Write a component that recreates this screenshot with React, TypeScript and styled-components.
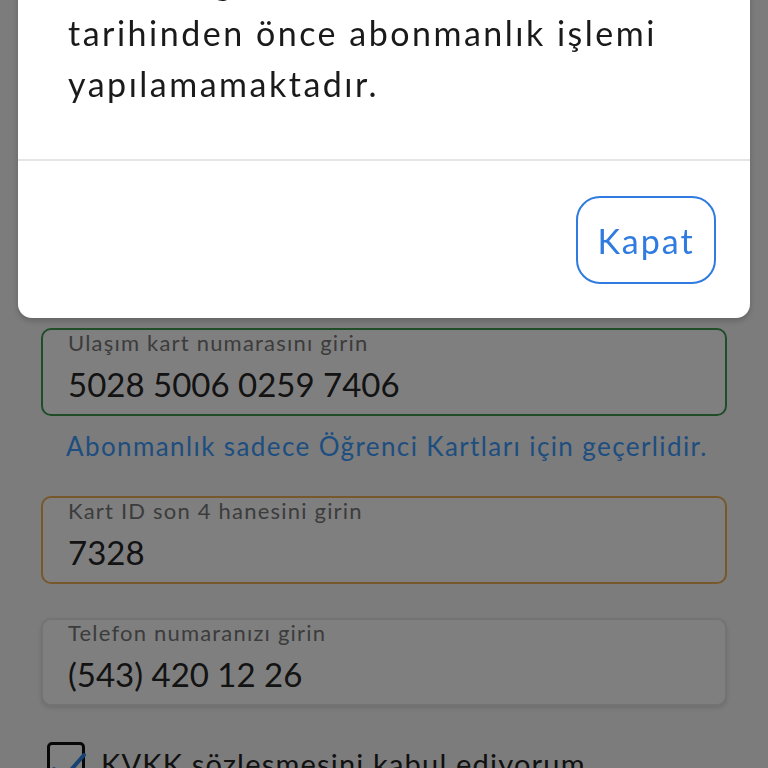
import styled, { createGlobalStyle } from 'styled-components';

const GlobalStyle = createGlobalStyle`
  html, body {
    margin: 0;
    padding: 0;
    height: 100%;
    overflow: hidden;
  }
  body {
    font-family: Lato, "Noto Sans", sans-serif;
    background: #f8f8f8;
  }
`;

type Tone = 'success' | 'warning' | 'idle';

const borderColors: Record<Tone, string> = {
  success: '#3c9a4e',
  warning: '#eeb055',
  idle: '#e6e6e6',
};

export default function App() {
  return (
    <>
      <GlobalStyle />
      <StyledPage>
        <StyledField tone="success">
          <span className="label">Ulaşım kart numarasını girin</span>
          <span className="value">5028 5006 0259 7406</span>
        </StyledField>
        <StyledHint>Abonmanlık sadece Öğrenci Kartları için geçerlidir.</StyledHint>
        <StyledField tone="warning">
          <span className="label">Kart ID son 4 hanesini girin</span>
          <span className="value">7328</span>
        </StyledField>
        <StyledField tone="idle" raised>
          <span className="label">Telefon numaranızı girin</span>
          <span className="value">(543) 420 12 26</span>
        </StyledField>
        <StyledCheckRow>
          <span className="box">
            <svg viewBox="0 0 40 40" width="40" height="40">
              <path
                d="M6 22 L15 32 L36 8"
                fill="none"
                stroke="#2f86e6"
                strokeWidth="4"
                strokeLinecap="round"
                strokeLinejoin="round"
              />
            </svg>
          </span>
          <span>KVKK sözleşmesini kabul ediyorum</span>
        </StyledCheckRow>
      </StyledPage>

      <StyledBackdrop>
        <StyledDialog>
          <StyledDialogBody>
            Kartınız güncel halde, vize
            <br />
            tarihinden önce abonmanlık işlemi
            <br />
            yapılamamaktadır.
          </StyledDialogBody>
          <StyledDialogFooter>
            <StyledCloseButton>Kapat</StyledCloseButton>
          </StyledDialogFooter>
        </StyledDialog>
      </StyledBackdrop>
    </>
  );
}

const StyledPage = styled.main`
  display: flex;
  flex-direction: column;
  padding: 328px 41px 0;
  box-sizing: border-box;
  height: 100vh;
`;

const StyledField = styled.div<{ tone: Tone; raised?: boolean }>`
  display: flex;
  flex-direction: column;
  flex-shrink: 0;
  height: 88px;
  box-sizing: border-box;
  padding: 0 25px;
  border: 2px solid ${(p) => borderColors[p.tone]};
  border-radius: 10px;
  background: #fff;
  margin-bottom: 34px;
  box-shadow: ${(p) => (p.raised ? '0 2px 4px rgba(0,0,0,0.12)' : 'none')};

  .label {
    font-size: 22px;
    line-height: 26px;
    letter-spacing: 1.2px;
    color: #787878;
  }
  .value {
    margin-top: 8px;
    font-size: 33px;
    line-height: 40px;
    color: #262626;
  }
`;

const StyledHint = styled.p`
  flex-shrink: 0;
  margin: -19px 0 35px 25px;
  font-size: 26px;
  line-height: 30px;
  letter-spacing: 1.4px;
  color: #3c9cff;
`;

const StyledCheckRow = styled.label`
  display: flex;
  flex-shrink: 0;
  align-items: flex-start;
  gap: 16px;
  margin: 2px 0 0 6px;
  font-size: 29px;
  line-height: 44px;
  letter-spacing: 1.2px;
  color: #222;

  .box {
    position: relative;
    width: 38px;
    height: 38px;
    box-sizing: border-box;
    border: 3px solid #111;
    border-radius: 5px;
    background: #fff;
    flex-shrink: 0;

    svg {
      position: absolute;
      left: -2px;
      top: 2px;
    }
  }
`;

const StyledBackdrop = styled.div`
  position: fixed;
  inset: 0;
  background: rgba(0, 0, 0, 0.5);
`;

const StyledDialog = styled.section`
  position: absolute;
  left: 18px;
  right: 18px;
  bottom: 450px;
  display: flex;
  flex-direction: column;
  background: #fff;
  border-radius: 14px;
  box-shadow: 0 3px 6px rgba(0, 0, 0, 0.2);
`;

const StyledDialogBody = styled.div`
  padding: 0 30px 50px 50px;
  font-size: 34px;
  line-height: 51px;
  letter-spacing: 2.5px;
  color: #1a1a1a;
  border-bottom: 2px solid #e6e6e6;
`;

const StyledDialogFooter = styled.div`
  display: flex;
  justify-content: flex-end;
  padding: 35px 34px 34px;
`;

const StyledCloseButton = styled.button`
  width: 140px;
  height: 88px;
  border: 2px solid #2f7be0;
  border-radius: 24px;
  background: #fff;
  color: #2f7be0;
  font-family: inherit;
  font-size: 34px;
  letter-spacing: 2px;
`;
